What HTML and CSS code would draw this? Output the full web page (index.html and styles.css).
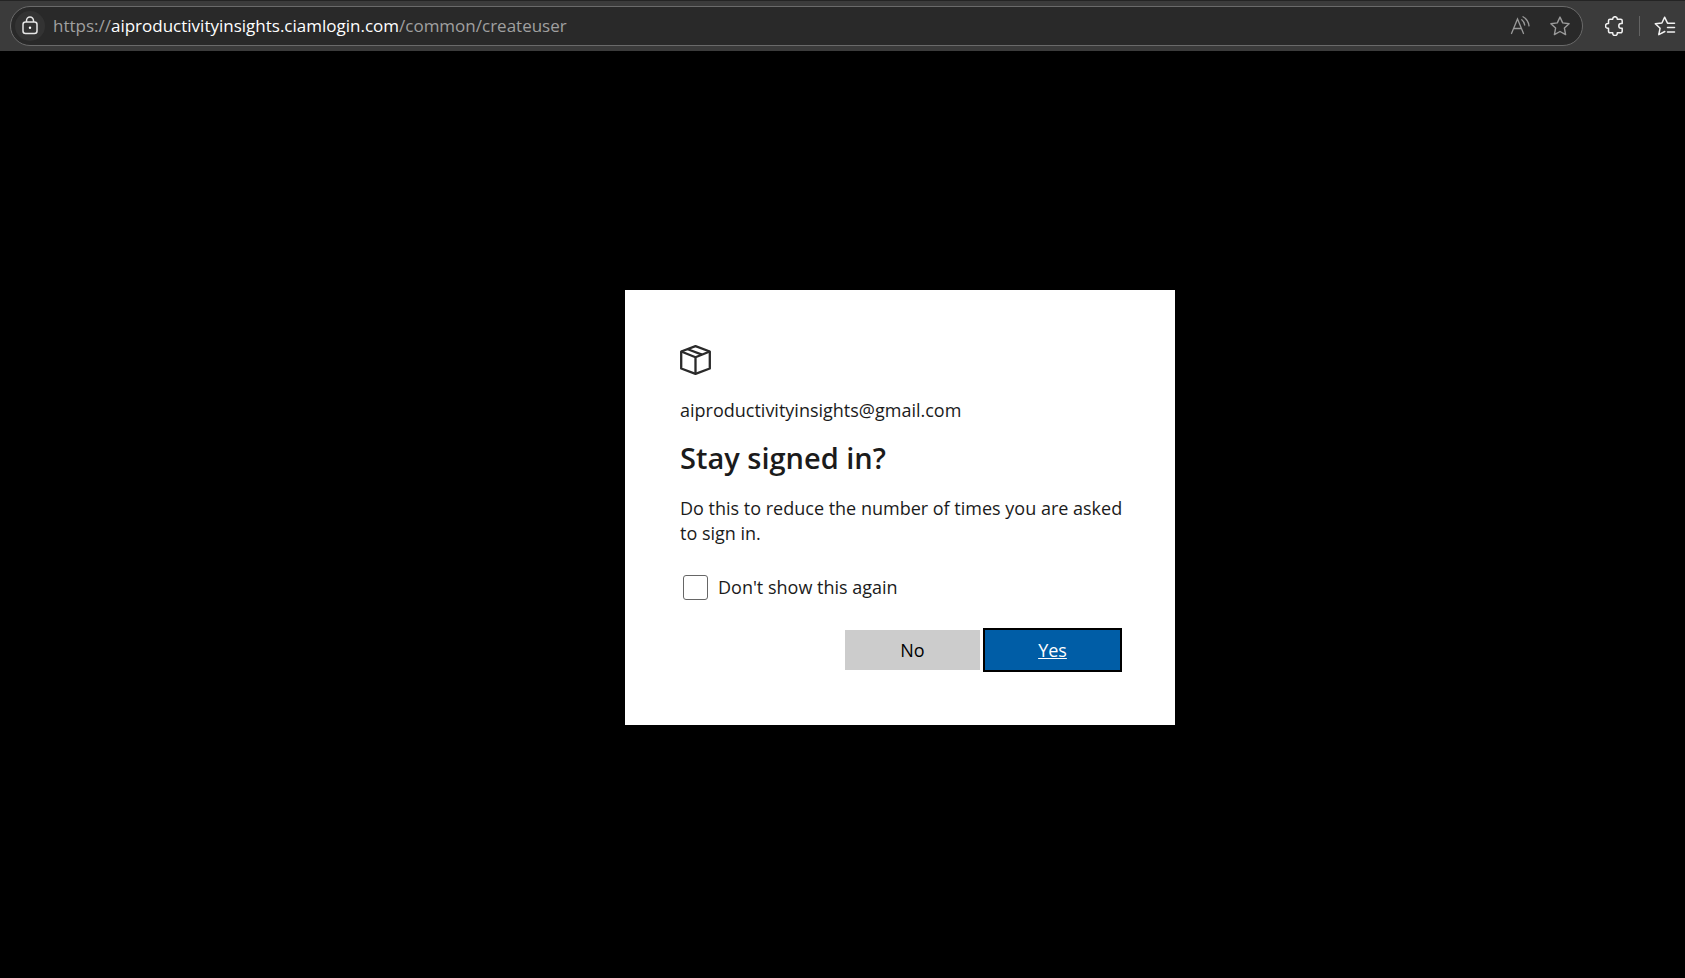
FILE: index.html
```html
<!DOCTYPE html>
<html lang="en">
<head>
<meta charset="utf-8">
<title>Stay signed in?</title>
<link rel="stylesheet" href="styles.css">
</head>
<body>
<header class="toolbar">
  <div class="address-bar">
    <button class="site-info" type="button" aria-label="View site information">
      <svg width="18" height="20" viewBox="0 0 18 20" fill="none" stroke="#e6e6e6" stroke-width="1.5">
        <rect x="2" y="6" width="14" height="11.5" rx="2.5"/>
        <path d="M5.500 6V4.500a3.500 3.500 0 0 1 7 0V6"/>
        <circle cx="9" cy="11.700" r="1.200" fill="#fff" stroke="none"/>
      </svg>
    </button>
    <div class="url">https://<span class="url-host">aiproductivityinsights.ciamlogin.com</span>/common/createuser</div>
    <button class="icon-button" type="button" aria-label="Read aloud">
      <svg width="20" height="20" viewBox="0 0 20 20" fill="none" stroke="#9a9a9a" stroke-width="1.300" stroke-linecap="round">
        <path d="M1.500 17.500L7.500 3L13.500 17.500M3.700 12.500H11.300"/>
        <path d="M11.800 3.700Q14.300 5.700 14.700 9M13 0.800Q18.100 3.500 19 9.800"/>
      </svg>
    </button>
    <button class="icon-button" type="button" aria-label="Add this page to favorites">
      <svg width="20" height="20" viewBox="0 0 20 20" fill="none" stroke="#9a9a9a" stroke-width="1.400" stroke-linejoin="round">
        <path d="M10 1.100L12.700 6.900L19.100 7.700L14.400 12.100L15.600 18.600L10 15.500L4.400 18.600L5.600 12.100L0.900 7.700L7.300 6.900Z"/>
      </svg>
    </button>
  </div>
  <div class="tools">
    <button class="icon-button" type="button" aria-label="Extensions">
      <svg width="20" height="20" viewBox="0 0 20 20" fill="none" stroke="#f2f2f2" stroke-width="1.500" stroke-linejoin="round">
        <path d="M5 3.300H7.700V3A2.300 2.300 0 0 1 12.300 3V3.300H15.700A1.500 1.500 0 0 1 17.200 4.800V7.600H16.100A2.300 2.300 0 0 0 16.100 12.200H17.200V15.300A1.500 1.500 0 0 1 15.700 16.800H12.300V17.200A2.300 2.300 0 0 1 7.700 17.200V16.800H5A1.500 1.500 0 0 1 3.500 15.300V12.200H2.800A2.300 2.300 0 0 1 2.800 7.600H3.500V4.800A1.500 1.500 0 0 1 5 3.300Z"/>
      </svg>
    </button>
    <span class="divider"></span>
    <button class="icon-button" type="button" aria-label="Favorites">
      <svg width="22" height="20" viewBox="0 0 22 20" fill="none" stroke="#f2f2f2" stroke-width="1.500" stroke-linejoin="round" stroke-linecap="round">
        <path d="M20.500 7.200H13.500L10.600 1.200L7.900 7L1.300 7.800L6.100 12.200L4.800 18.700L10.800 15.500"/>
        <path d="M13.500 11.600H20.500M13.500 16H20.500"/>
      </svg>
    </button>
  </div>
</header>
<main class="stage">
  <form class="card">
    <svg class="logo" width="31" height="30" viewBox="0 0 31 30" fill="none" stroke="#2a2a2a" stroke-width="2.300" stroke-linejoin="round">
      <path d="M15.500 1.200L29.800 6.500V23.500L15.500 28.800L1.200 23.500V6.500Z"/>
      <path d="M1.200 6.500L15.500 12.200L29.800 6.500M15.500 12.200V28.800"/>
      <path d="M7.800 4.200L22 9.600"/>
    </svg>
    <div class="account">aiproductivityinsights@gmail.com</div>
    <h1 class="title">Stay signed in?</h1>
    <p class="text">Do this to reduce the number of times you are asked to sign in.</p>
    <div class="option">
      <input class="checkbox" type="checkbox" id="dont-show">
      <label for="dont-show">Don't show this again</label>
    </div>
    <div class="actions">
      <button class="button" type="button">No</button>
      <button class="button button-primary" type="submit">Yes</button>
    </div>
  </form>
</main>
</body>
</html>
```
FILE: styles.css
```css
* {
  box-sizing: border-box;
}

body {
  margin: 0;
  min-height: 100vh;
  display: flex;
  flex-direction: column;
  background: #000;
  color: #1b1b1b;
  font-family: "Open Sans", "Noto Sans", sans-serif;
  font-size: 18px;
  line-height: 25px;
}

button {
  font: inherit;
  border: 0;
  padding: 0;
}

svg {
  display: block;
}

.toolbar {
  display: flex;
  align-items: center;
  padding: 5px 9px 5px 10px;
  background: #3b3b3b;
  border-top: 1px solid #242424;
}

.address-bar {
  flex: 1;
  display: flex;
  align-items: center;
  gap: 20px;
  height: 40px;
  padding: 0 12px 0 4px;
  border: 1px solid #6a6a6a;
  border-radius: 20px;
  background: #292929;
}

.site-info {
  display: flex;
  align-items: center;
  justify-content: center;
  width: 30px;
  height: 30px;
  border-radius: 50%;
  background: #333;
}

.url {
  flex: 1;
  margin-left: -12px;
  padding-bottom: 2px;
  color: #a0a0a0;
  font-size: 17px;
}

.url-host {
  color: #fff;
}

.icon-button {
  background: none;
}

.tools {
  display: flex;
  align-items: center;
  gap: 14px;
  padding-left: 22px;
}

.divider {
  width: 1px;
  height: 20px;
  background: #636363;
}

.stage {
  flex: 1;
  display: flex;
  align-items: center;
  justify-content: center;
  padding: 0 0 15px 115px;
}

.card {
  width: 100%;
  max-width: 550px;
  padding: 55px;
  background: #fff;
}

.account {
  margin-top: 23px;
}

.title {
  margin: 17px 0 21px;
  font-size: 29px;
  font-weight: 600;
  line-height: 35px;
}

.text {
  margin: 0 -5px 0 0;
}

.option {
  display: flex;
  align-items: center;
  gap: 10px;
  margin: 29px 0 30px;
  padding-left: 3px;
}

.checkbox {
  appearance: none;
  width: 25px;
  height: 25px;
  margin: 0;
  border: 1px solid #666;
  border-radius: 3px;
  background: #fff;
}

.actions {
  display: flex;
  justify-content: flex-end;
  gap: 5px;
}

.button {
  width: 135px;
  height: 40px;
  padding-top: 2px;
  background: #ccc;
  color: #000;
}

.button-primary {
  outline: 2px solid #000;
  background: #005da6;
  color: #fff;
  text-decoration: underline;
}
```
